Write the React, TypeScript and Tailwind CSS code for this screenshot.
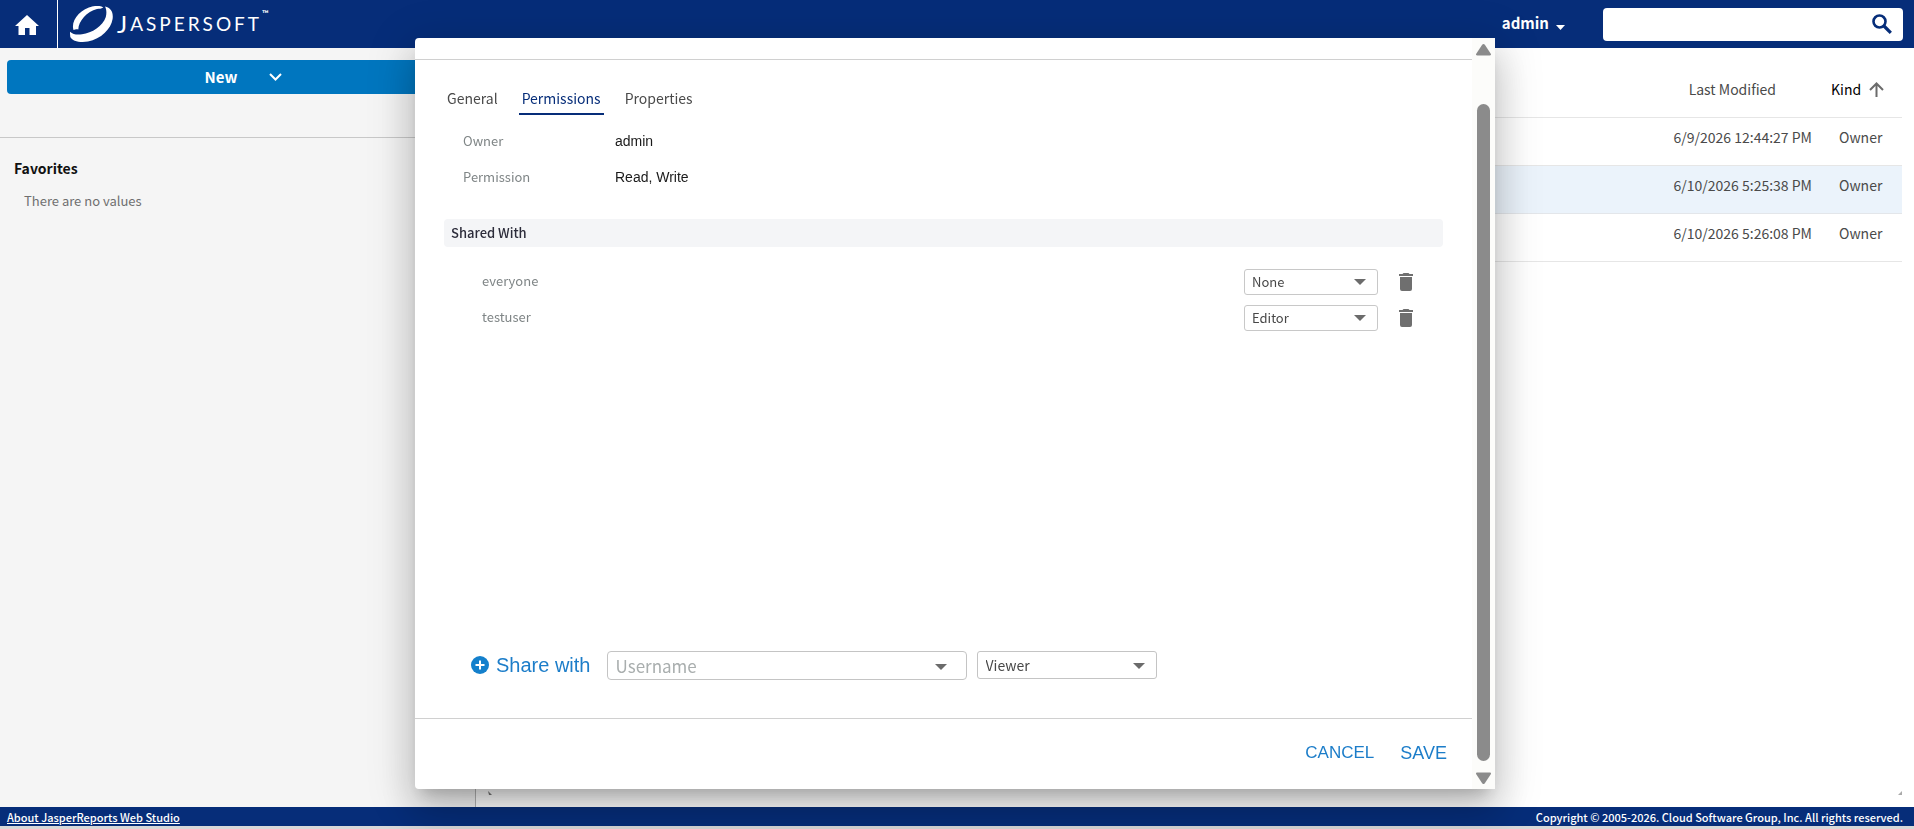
import React, { useState } from 'react';

const ROWS = [
  { modified: '6/9/2026 12:44:27 PM', kind: 'Owner' },
  { modified: '6/10/2026 5:25:38 PM', kind: 'Owner', selected: true },
  { modified: '6/10/2026 5:26:08 PM', kind: 'Owner' },
];

const TABS = ['General', 'Permissions', 'Properties'];
const LEVELS = ['None', 'Viewer', 'Editor', 'Owner'];

const Caret = ({ className = '' }: { className?: string }) => (
  <svg className={`pointer-events-none absolute h-[6px] w-3 ${className}`} viewBox="0 0 12 6" fill="#6b6b6b">
    <path d="M0 0h12L6 6z"/>
  </svg>
);

const Logo = () => (
  <a href="#" className="flex items-center text-white" aria-label="Jaspersoft">
    <svg className="h-9 w-[43px]" viewBox="0 0 43 36" fill="currentColor">
      <path d="M3.500 24C.5 15 10 3 23 .3c4-.8 8-.6 10.300 1.200C31 3 29.500 2.500 27 3 17 5.500 8.500 15 8.300 23.500 6 23 5 24 3.500 24z"/>
      <path d="M35 .6c6 1.400 8.500 5.900 7.600 12.400C41 23 31 33 18 35.500 10 37 2 35 .3 31 0 29 0 27.500 0 25.700 3 28.500 7 29 12 28.300 22 27 33 20 35.800 11 36.800 7 36.500 3.500 35 .6z"/>
    </svg>
    <span className="ml-1 flex items-start font-[Lato,sans-serif] text-[19px] leading-6 tracking-[3px]">
      <span className="text-2xl leading-6">J</span>ASPERSOFT
      <sup className="text-[9px] leading-3 font-bold tracking-normal">™</sup>
    </span>
  </a>
);

const Header = () => (
  <header className="flex h-12 shrink-0 items-center bg-[#062d79] pr-[11px]">
    <a href="#" aria-label="Home" className="flex h-full w-[58px] items-center border-r border-white pl-[15px]">
      <svg className="mt-[2px] h-5 w-6" viewBox="0 0 24 20" fill="#fff">
        <path d="M12 0L0 11h3.500v9h6.500v-7h4.500v7H21v-9h3z"/>
      </svg>
    </a>
    <div className="ml-3 flex-1"><Logo/></div>
    <button className="flex items-center gap-[7px] pb-[2px] text-[15px] leading-5 font-bold text-white">
      admin
      <svg className="mt-2 h-[5px] w-[9px]" viewBox="0 0 9 5" fill="#fff"><path d="M0 0h9L4.500 5z"/></svg>
    </button>
    <label className="ml-[38px] flex h-[33px] w-[300px] items-center rounded-sm bg-white pr-[11px]">
      <input type="text" aria-label="Search" className="h-full min-w-0 flex-1 px-2 text-sm outline-none"/>
      <svg className="h-5 w-5" viewBox="0 0 20 20" fill="none" stroke="#062d79">
        <circle cx="7.500" cy="7.500" r="6" strokeWidth="2.600"/>
        <path d="M12 12l6.800 6.800" strokeWidth="3.200"/>
      </svg>
    </label>
  </header>
);

const Sidebar = () => (
  <aside className="w-[476px] shrink-0 border-r border-[#b5b5b5] bg-[#f5f5f5]">
    <div className="flex h-[90px] items-start border-b border-[#c8c8c8] px-[7px] pt-3">
      <button className="flex h-[34px] flex-1 items-center justify-center gap-8 rounded-sm bg-[#0076bf] pl-3 text-[15px] font-bold text-white">
        New
        <svg className="h-2 w-[13px]" viewBox="0 0 13 8" fill="none" stroke="#fff" strokeWidth="2">
          <path d="M1 1l5.500 5.500L12 1"/>
        </svg>
      </button>
    </div>
    <h2 className="mt-5 pl-[14px] text-sm leading-5 font-bold text-[#111]">Favorites</h2>
    <p className="mt-[13px] pl-6 text-[13px] leading-5 text-[#6f6f6f]">There are no values</p>
  </aside>
);

const Repository = () => (
  <main className="flex min-w-0 flex-1 flex-col pr-3 pb-3">
    <table className="mt-[21px] w-full border-collapse text-sm text-[#4a4a4a]">
      <thead>
        <tr className="h-12 border-b border-[#e6e6e6]">
          <th scope="col" className="pr-9 pb-2 text-right font-normal">Last Modified</th>
          <th scope="col" className="w-[90px] pb-2 pl-[19px] text-left font-normal text-black">
            <span className="flex items-center gap-2">
              Kind
              <svg className="mt-[2px] h-[15px] w-[15px]" viewBox="0 0 15 15" fill="none" stroke="#6b6b6b" strokeWidth="2">
                <path d="M7.500 15V1.500M1 8l6.500-6.500L14 8"/>
              </svg>
            </span>
          </th>
        </tr>
      </thead>
      <tbody>
        {ROWS.map((row) => (
          <tr key={row.modified} className={row.selected ? 'h-12 border-b border-[#e3e6ea] bg-[#ebf3fb]' : 'h-12 border-b border-[#e6e6e6]'}>
            <td className="pb-2 text-right">{row.modified}</td>
            <td className="pb-2 pl-[27px]">{row.kind}</td>
          </tr>
        ))}
      </tbody>
    </table>
    <div className="mt-auto flex justify-between pl-3">
      <svg className="h-1 w-1" viewBox="0 0 4 4" fill="#777"><path d="M0 0l4 4H1z"/></svg>
      <svg className="h-1 w-1" viewBox="0 0 4 4" fill="#aaa"><path d="M4 0v4H0z"/></svg>
    </div>
  </main>
);

const SharedRow = ({ name, level }: { name: string; level: string }) => (
  <li className="flex h-9 items-center pr-[30px] pl-[38px]">
    <label htmlFor={`level-${name}`} className="flex-1 text-[13px] text-[#7f8586]">{name}</label>
    <div className="relative">
      <select id={`level-${name}`} defaultValue={level}
              className="h-[26px] w-[134px] appearance-none rounded-[3px] border border-[#c8c8c8] bg-white pl-[7px] text-[13px] leading-5 text-[#474747]">
        {LEVELS.map((l) => <option key={l}>{l}</option>)}
      </select>
      <Caret className="top-[11px] right-3"/>
    </div>
    <button aria-label={`Remove ${name}`} className="ml-[21px] pt-[2px]">
      <svg className="h-[18px] w-[14px]" viewBox="0 0 14 18" fill="#6f6f6f">
        <path d="M0 1h3.500l1-1h5l1 1H14v2H0zM1 4h12v12a2 2 0 01-2 2H3a2 2 0 01-2-2z"/>
      </svg>
    </button>
  </li>
);

const ScrollRail = () => (
  <div className="flex w-[23px] shrink-0 flex-col items-center bg-[#fcfcfa] pt-[6px] pb-[5px]">
    <svg className="h-3 w-[15px]" viewBox="0 0 15 12" fill="#8b8b8b">
      <path d="M7.500 0c.7 0 1 .3 1.500 1l5.600 8.500c.8 1.300.3 2-1 2H1.400c-1.300 0-1.800-.7-1-2L6 1c.5-.7.8-1 1.500-1z"/>
    </svg>
    <div className="mt-12 mb-[11px] w-[13px] flex-1 rounded-full bg-[#8b8b8b]"/>
    <svg className="h-3 w-[15px]" viewBox="0 0 15 12" fill="#8b8b8b">
      <path d="M7.500 12c.7 0 1-.3 1.500-1l5.600-8.500c.8-1.300.3-2-1-2H1.400c-1.300 0-1.800.7-1 2L6 11c.5.7.8 1 1.500 1z"/>
    </svg>
  </div>
);

const PropertiesDialog = () => {
  const [tab, setTab] = useState('Permissions');

  return (
    <div className="fixed inset-0 flex justify-center pt-[38px] pr-1 pb-10">
      <div role="dialog" aria-label="Resource permissions"
           className="flex h-full w-[1080px] overflow-hidden rounded-l bg-white shadow-[0_11px_15px_-7px_rgba(0,0,0,0.2),0_24px_38px_3px_rgba(0,0,0,0.14),0_9px_46px_8px_rgba(0,0,0,0.12)]">
        <div className="flex min-w-0 flex-1 flex-col">
          <div className="h-[22px] shrink-0 border-b border-[#d0d0d0]"/>
          <div className="flex flex-1 flex-col px-[29px]">
            <div role="tablist" className="mt-[23px] flex gap-[18px]">
              {TABS.map((t) => (
                <button key={t} role="tab" aria-selected={t === tab} onClick={() => setTab(t)}
                        className={t === tab
                          ? 'h-8 border-b-2 border-[#062d79] px-[3px] text-sm text-[#062d79]'
                          : 'h-8 border-b-2 border-transparent px-[3px] text-sm text-[#4a4a4a]'}>
                  {t}
                </button>
              ))}
            </div>
            <dl className="mt-2 grid grid-cols-[152px_1fr] pl-[19px]">
              <dt className="text-[13px] leading-9 text-[#7f8586]">Owner</dt>
              <dd className="font-[Liberation_Sans,sans-serif] text-sm leading-9 text-[#1a1a1a]">admin</dd>
              <dt className="text-[13px] leading-9 text-[#7f8586]">Permission</dt>
              <dd className="font-[Liberation_Sans,sans-serif] text-sm leading-9 text-[#1a1a1a]">Read, Write</dd>
            </dl>
            <h3 className="mt-6 rounded-sm bg-[#f4f5f7] pl-[7px] text-[13px] leading-7 font-medium text-[#2c2c3a]">Shared With</h3>
            <ul className="mt-4">
              <SharedRow name="everyone" level="None"/>
              <SharedRow name="testuser" level="Editor"/>
            </ul>
            <div className="mt-auto mb-[38px] flex items-start pl-[27px]">
              <button className="flex h-7 items-center gap-[7px] font-[Liberation_Sans,sans-serif] text-xl leading-6 text-[#1c7dc9]">
                <svg className="h-[18px] w-[18px]" viewBox="0 0 18 18">
                  <circle cx="9" cy="9" r="9" fill="#1480cc"/>
                  <path d="M9 4.500v9M4.500 9h9" stroke="#fff" strokeWidth="2"/>
                </svg>
                Share with
              </button>
              <div className="relative ml-4">
                <input type="text" aria-label="Username" placeholder="Username"
                       className="h-[29px] w-[360px] rounded border border-[#c4c4c4] pl-2 text-[17px] leading-6 outline-none placeholder:text-[#a9aeae]"/>
                <Caret className="top-[13px] right-5"/>
              </div>
              <div className="relative ml-[10px]">
                <select aria-label="Permission level" defaultValue="Viewer"
                        className="h-7 w-[180px] appearance-none rounded-[3px] border border-[#c4c4c4] bg-white pl-2 text-sm text-[#474747]">
                  {LEVELS.map((l) => <option key={l}>{l}</option>)}
                </select>
                <Caret className="top-3 right-3"/>
              </div>
            </div>
          </div>
          <div className="flex h-[71px] shrink-0 items-center justify-end gap-[26px] border-t border-[#d0d0d0] pr-[25px] pb-[2px] font-[Liberation_Sans,sans-serif] text-[#1c7dc9]">
            <button className="text-[17px]">CANCEL</button>
            <button className="text-lg">SAVE</button>
          </div>
        </div>
        <ScrollRail/>
      </div>
    </div>
  );
};

const App = () => (
  <div className="flex min-h-screen flex-col bg-white font-[Noto_Sans_CJK_SC,sans-serif]">
    <Header/>
    <div className="flex flex-1">
      <Sidebar/>
      <Repository/>
    </div>
    <footer className="flex h-[22px] shrink-0 items-center justify-between border-b-3 border-[#d8d8d8] bg-[#062d79] pr-[11px] pl-[7px] text-[11px] leading-4 font-medium text-white">
      <a href="#" className="underline">About JasperReports Web Studio</a>
      <span>Copyright © 2005-2026. Cloud Software Group, Inc. All rights reserved.</span>
    </footer>
    <PropertiesDialog/>
  </div>
);

export default App;
